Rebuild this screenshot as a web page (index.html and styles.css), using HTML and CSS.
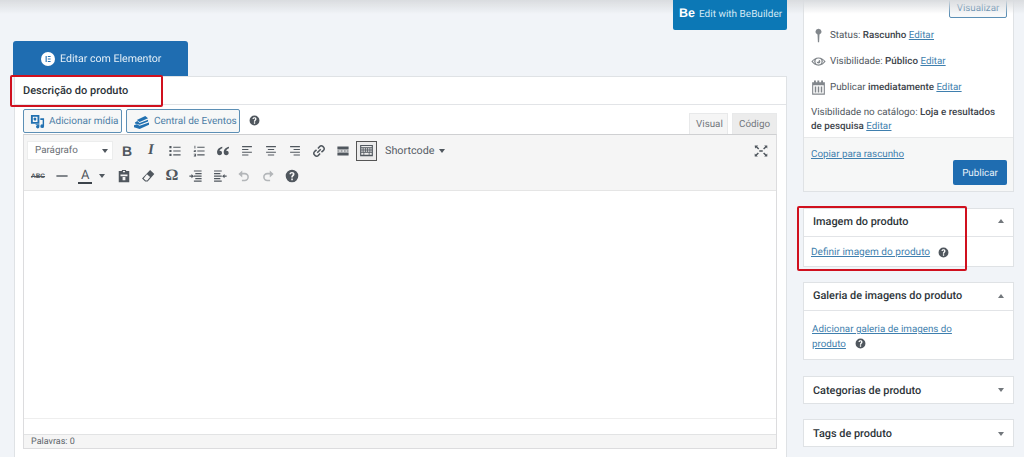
FILE: index.html
```html
<!DOCTYPE html>
<html lang="pt-BR">
<head>
<meta charset="utf-8">
<title>Editar produto</title>
<link rel="stylesheet" href="styles.css">
</head>
<body>
<div class="page">
  <main class="main">
    <a class="be-btn"><b class="be-logo">Be</b><span>Edit with BeBuilder</span></a>
    <a class="el-btn">
      <svg class="el-icon" viewBox="0 0 14 14"><circle cx="7" cy="7" r="7" fill="#fff"/><path d="M4.6 4h1.100v6H4.600zM6.800 4h2.800v1.100H6.800zM6.800 6.450h2.800v1.100H6.800zM6.800 8.900h2.800V10H6.800z" fill="#1f6db1"/></svg>
      <span>Editar com Elementor</span>
    </a>
    <section class="panel">
      <div class="mark mark-title"></div>
      <h2 class="panel-title">Descrição do produto</h2>
      <div class="editor-wrap">
        <div class="media-row">
          <a class="media-btn media-add">
            <svg viewBox="0 0 16 16" class="media-ico"><path fill="#2271b1" d="M1 1h9v9.500H1zm2 2v5.500h5V3zM4.600 4a1.500 1.500 0 1 0 2 2 1.500 1.500 0 0 0-2-2zM11 4.500h4v8.500a2 2 0 1 1-1.500-1.900V6.500H11zM6 11h4v2.500a1.800 1.800 0 1 1-1.500-1.700H6z" fill-rule="evenodd"/></svg>
            <span>Adicionar mídia</span>
          </a>
          <a class="media-btn media-ev">
            <svg viewBox="0 0 18 16" class="media-ico wide"><path fill="#2271b1" d="M4 6.500 13 2l3 2.500-9 4zM2 9l2.500-1.500L7 9.500l9-3.500v2L7 11.500 2 10zM1 12l3-1 3 1.500 10-3.500v2.500L7 16l-6-2z"/></svg>
            <span>Central de Eventos</span>
          </a>
          <svg viewBox="0 0 20 20" class="help-ico"><use href="#i-help"/></svg>
          <div class="tabs">
            <span class="tab tab-on">Visual</span>
            <span class="tab">Código</span>
          </div>
        </div>
        <div class="editor">
          <div class="toolbar">
            <div class="tb-row">
              <div class="fmt-select"><span>Parágrafo</span><i class="caret"></i></div>
              <span class="tb"><b class="glyph-b">B</b></span>
              <span class="tb"><i class="glyph-i">I</i></span>
              <span class="tb"><svg viewBox="0 0 20 20"><path d="M2 3h3v3H2zM2 8.500h3v3H2zM2 14h3v3H2zM7.500 3.800H18v1.500H7.500zM7.500 9.300H18v1.500H7.500zM7.500 14.800H18v1.500H7.500z"/></svg></span>
              <span class="tb"><svg viewBox="0 0 20 20"><path d="M3.500 2.500h1.300v4H3.500zM2.500 8.500h3.300v1.100H4v.6h1.800v1.100H2.500v-1.400l1.800-.9H2.500zM2.500 14h3.300v4H2.500v-1.100h2v-.5H3v-.8h1.500v-.5h-2zM7.500 3.800H18v1.500H7.500zM7.500 9.300H18v1.500H7.500zM7.500 14.800H18v1.500H7.500z"/></svg></span>
              <span class="tb"><svg viewBox="0 0 20 20"><path d="M9 4C5 5 1.500 7.500 1.500 11.800 1.500 14.500 3.200 16 5.200 16S8.600 14.600 8.600 12.800 7.400 9.800 5.700 9.800c-.4 0-.7 0-.8.100.2-1.700 1.700-3.100 4.100-3.900zM18.500 4c-4 1-7.500 3.500-7.500 7.800 0 2.700 1.700 4.200 3.700 4.200s3.400-1.400 3.400-3.200-1.200-3-2.900-3c-.4 0-.7 0-.8.100.2-1.700 1.700-3.100 4.100-3.900z"/></svg></span>
              <span class="tb"><svg viewBox="0 0 20 20"><path d="M3 3h14v1.600H3zM3 7h9v1.600H3zM3 11h14v1.600H3zM3 15h9v1.600H3z"/></svg></span>
              <span class="tb"><svg viewBox="0 0 20 20"><path d="M3 3h14v1.600H3zM5.500 7h9v1.600h-9zM3 11h14v1.600H3zM5.500 15h9v1.600h-9z"/></svg></span>
              <span class="tb"><svg viewBox="0 0 20 20"><path d="M3 3h14v1.600H3zM8 7h9v1.600H8zM3 11h14v1.600H3zM8 15h9v1.600H8z"/></svg></span>
              <span class="tb"><svg viewBox="0 0 20 20"><path fill="none" stroke="#50575e" stroke-width="2.200" d="M8.500 6.500l2.500-3a3.100 3.100 0 0 1 4.400-.1l1.200 1.200a3.100 3.100 0 0 1-.1 4.400l-3 2.500M11.500 13.500l-2.500 3a3.100 3.100 0 0 1-4.400.1l-1.200-1.200a3.100 3.100 0 0 1 .1-4.400l3-2.500M7.500 12.500l5-5"/></svg></span>
              <span class="tb"><svg viewBox="0 0 20 20"><path d="M2 3.500h16v4.500H2zM2 12h16v4.500H2zM2 9.400h3v1.200H2zM6.500 9.400h3v1.200h-3zM11 9.400h3v1.200h-3zM15 9.400h3v1.200h-3z"/></svg></span>
              <span class="tb tb-active"><svg viewBox="0 0 20 20"><path fill-rule="evenodd" d="M1.500 2.500h17v15h-17zM3 4v1.500h14V4zM3 7v1.500h2V7zm3 0v1.500h2V7zm3 0v1.500h2V7zm3 0v1.500h2V7zm3 0v1.500h2V7zM3 10v1.500h2V10zm3 0v1.500h2V10zm3 0v1.500h2V10zm3 0v1.500h2V10zm3 0v1.500h2V10zM3 13v2.500h3V13zm4 0v2.500h6V13zm7 0v2.500h3V13z"/></svg></span>
              <span class="shortcode">Shortcode<i class="caret"></i></span>
              <span class="tb tb-full"><svg viewBox="0 0 20 20"><path d="M1 2h5L4.500 3.500 7.500 6.500l-1.500 1.500L3 5 1.500 6.500zM19 2v4.500L17.500 5l-3 3L13 6.500l3-3L14.500 2zM1 18v-4.500L2.500 15l3-3L7 13.500l-3 3L5.500 18zM19 18h-4.500l1.500-1.500-3-3 1.500-1.500 3 3 1.500-1.500zM7.500 9h5v2h-5z"/></svg></span>
            </div>
            <div class="tb-row tb-row2">
              <span class="tb"><s class="glyph-abc">ABC</s></span>
              <span class="tb"><svg viewBox="0 0 20 20"><path d="M2 9h16v2H2z"/></svg></span>
              <span class="tb tb-color"><span class="glyph-a">A</span><i class="caret"></i></span>
              <span class="tb"><svg viewBox="0 0 20 20"><path fill-rule="evenodd" d="M7 1.500h6V3h4.500v16h-15V3H7zM8.500 3v1.500h3V3zM5 8v2.500h10V8zm3 3.500V16h4v-4.500z"/></svg></span>
              <span class="tb"><svg viewBox="0 0 20 20"><path fill-rule="evenodd" d="M13 1.500 19 7 9.500 18H6L1.500 13.500zM3.800 13.500 6.800 16.500H8.800L13 11.500 8.500 7.500z"/></svg></span>
              <span class="tb"><span class="glyph-o">Ω</span></span>
              <span class="tb"><svg viewBox="0 0 20 20"><path d="M7 2h11v1.700H7zM9 5.700h9v1.700H9zM7 9.300h11V11H7zM9 13h9v1.700H9zM7 16.500h11v1.700H7zM7 10.200 3.500 7.300v2H.5v1.700h3v2.100z"/></svg></span>
              <span class="tb"><svg viewBox="0 0 20 20"><path d="M1.500 2h11v1.700h-11zM1.500 5.700h9v1.700h-9zM1.500 9.300h11V11h-11zM1.500 13h9v1.700h-9zM1.500 16.500h11v1.700h-11zM13 10.200l3.500-2.900v2h3v1.700h-3v2.100z"/></svg></span>
              <span class="tb tb-off"><svg viewBox="0 0 20 20"><path d="M2 7 7.500 2v3.500H11a6 6 0 0 1 0 12H7v-2.200h4a3.800 3.800 0 0 0 0-7.600H7.500V12z"/></svg></span>
              <span class="tb tb-off"><svg viewBox="0 0 20 20"><path d="M18 7 12.500 2v3.500H9a6 6 0 0 0 0 12h4v-2.200H9a3.800 3.800 0 0 1 0-7.600h3.500V12z"/></svg></span>
              <span class="tb"><svg viewBox="0 0 20 20"><use href="#i-help"/></svg></span>
            </div>
          </div>
          <div class="editor-body"></div>
          <div class="editor-gap"></div>
          <div class="status">Palavras: 0</div>
        </div>
      </div>
    </section>
  </main>

  <aside class="side">
    <section class="box box-publish">
      <div class="pub-top"><a class="btn-preview">Visualizar</a></div>
      <div class="pub-row"><svg viewBox="0 0 20 20"><path d="M10 1a4 4 0 0 1 1.300 7.800L10.800 19H9.200l-.5-10.200A4 4 0 0 1 10 1z"/></svg><span>Status: <b>Rascunho</b> <a>Editar</a></span></div>
      <div class="pub-row"><svg viewBox="0 0 20 20"><path fill-rule="evenodd" d="M10 4.500c4 0 7.200 2.500 9.500 5.500-2.300 3-5.500 5.500-9.500 5.500S2.800 13 .5 10C2.800 7 6 4.500 10 4.500zm0 1.500a4 4 0 1 0 0 8 4 4 0 0 0 0-8zM4.500 7.600A9 9 0 0 0 2.600 10a9 9 0 0 0 2.600 2.700A6 6 0 0 1 4.500 7.600zm11 0a6 6 0 0 1-.7 5.100 9 9 0 0 0 2.600-2.700 9 9 0 0 0-1.900-2.400zM10 7.500a2.500 2.500 0 1 1-2.500 2.500 1.500 1.500 0 0 0 2.500-2.500z"/></svg><span>Visibilidade: <b>Público</b> <a>Editar</a></span></div>
      <div class="pub-row"><svg viewBox="0 0 20 20"><path fill-rule="evenodd" d="M4 .5h2.500V3h2V.5H11V3h2.500V.5H16V3h2.500v16.500h-17V3H4zM3 7v11h14V7zM5 8.500h2v8H5zm4 0h2v8H9zm4 0h2v8h-2z"/></svg><span>Publicar <b>imediatamente</b> <a>Editar</a></span></div>
      <p class="pub-cat">Visibilidade no catálogo: <b>Loja e resultados de pesquisa</b> <a>Editar</a></p>
      <div class="pub-foot">
        <a class="copy-link">Copiar para rascunho</a>
        <a class="btn-publish">Publicar</a>
      </div>
    </section>

    <section class="box">
      <div class="mark mark-image"></div>
      <header class="box-head"><h3>Imagem do produto</h3><i class="arrow up"></i></header>
      <div class="box-body body-image"><a>Definir imagem do produto</a><svg viewBox="0 0 20 20" class="help-ico"><use href="#i-help"/></svg></div>
    </section>

    <section class="box">
      <header class="box-head"><h3>Galeria de imagens do produto</h3><i class="arrow up"></i></header>
      <div class="box-body body-gallery"><a>Adicionar galeria de imagens do produto</a><svg viewBox="0 0 20 20" class="help-ico"><use href="#i-help"/></svg></div>
    </section>

    <section class="box">
      <header class="box-head closed"><h3>Categorias de produto</h3><i class="arrow"></i></header>
    </section>

    <section class="box">
      <header class="box-head closed"><h3>Tags de produto</h3><i class="arrow"></i></header>
    </section>
  </aside>
</div>

<svg class="sprite" width="0" height="0"><symbol id="i-help" viewBox="0 0 20 20"><path fill-rule="evenodd" d="M10 1a9 9 0 1 1 0 18 9 9 0 0 1 0-18zM8.900 13.400v2.500h2.300v-2.500zM10 4.200c-2.100 0-3.600 1.200-3.700 3.200h2.200c.1-.8.600-1.300 1.400-1.300s1.300.4 1.300 1.100c0 1.400-2.300 1.600-2.300 4.500v.6h2.300v-.4c0-1.900 2.400-2.100 2.400-4.800 0-1.800-1.600-2.900-3.600-2.900z"/></symbol></svg>
</body>
</html>
```
FILE: styles.css
```css
* { box-sizing: border-box; }
html, body { margin: 0; height: 457px; overflow: hidden; }
body {
  background: #f1f4f8;
  color: #50575e;
  font-family: Roboto, "Open Sans", "Liberation Sans", sans-serif;
  font-size: 9.800px;
  text-rendering: geometricPrecision;
}
a { cursor: pointer; }
.sprite { position: absolute; }

.page { position: relative; display: flex; align-items: flex-start; height: 457px; padding-left: 13px; filter: blur(.45px); }
.page::before {
  content: ""; position: absolute; left: 0; right: 0; top: 0; height: 14px; z-index: 3; pointer-events: none;
  background: linear-gradient(#d9dcdf, rgba(225,228,231,0));
}

/* main column */
.main { width: 774px; display: flex; flex-direction: column; align-items: flex-start; }
.be-btn {
  align-self: flex-end; position: relative; z-index: 4; width: 114px; height: 30px; padding: 0 0 1px 6px;
  display: flex; align-items: center; gap: 4px; white-space: nowrap;
  background: #0c78b6; color: #d3e9f5; border-radius: 0 0 2px 2px; font-size: 10px;
}
.be-logo { color: #fff; font-family: "Liberation Sans", sans-serif; font-size: 12.500px; margin-top: -3px; }
.el-btn {
  margin-top: 11px; width: 175px; height: 35px; padding-left: 28px;
  display: flex; align-items: center; gap: 5px;
  background: #1f6db1; color: #e4eff7; border-radius: 3px 3px 0 0; font-size: 10.600px;
}
.el-icon { width: 14px; height: 14px; }

.panel { position: relative; margin-left: 1px; width: 773px; height: 400px; background: #fff; border: 1px solid #dfe2e5; }
.panel-title { margin: 0; height: 28px; padding: 0 0 0 8px; display: flex; align-items: center; border-bottom: 1px solid #e2e4e7; color: #2c3338; font-size: 11px; font-weight: 500; }
.mark { position: absolute; z-index: 2; border: 2.500px solid #d0101e; border-radius: 2px; pointer-events: none; }
.mark-title { left: -5px; top: -2px; width: 153px; height: 32px; }
.mark-image { left: -7px; top: -3px; width: 170px; height: 65px; }

.editor-wrap { padding: 0 9px 0 8px; }
.media-row { display: flex; align-items: flex-end; height: 29px; }
.media-btn {
  display: flex; align-items: center; height: 24px; margin: 0 4px 1px 0; gap: 4px;
  border: 1px solid #5c8fb5; border-radius: 2px; background: #f6f7f7; color: #4d7ea6; font-size: 10px; white-space: nowrap;
}
.media-add { width: 99px; padding-left: 6px; }
.media-ev { width: 114px; padding-left: 6px; }
.media-ico { width: 15px; height: 15px; flex: none; }
.media-ico.wide { width: 17px; }
.help-ico { width: 11px; height: 11px; fill: #50575e; flex: none; }
.media-row .help-ico { margin: 0 0 8px 5px; }
.tabs { margin-left: auto; display: flex; gap: 4px; align-items: flex-end; }
.tab { height: 21px; padding: 0 6px; display: flex; align-items: center; border: 1px solid #e8e9ea; border-bottom: 0; background: #ececec; color: #72777c; font-size: 9.800px; }
.tab-on { background: #f5f5f5; width: 39px; }

.editor { border: 1px solid #dcdcde; border-top-color: #cfd0d2; }
.toolbar { height: 56px; background: #f5f5f5; border-bottom: 1px solid #e5e5e5; }
.tb-row { display: flex; align-items: center; height: 28px; padding: 3px 0 0 3px; }
.tb-row2 { height: 24px; padding: 0 0 0 2px; margin-top: 1px; }
.fmt-select { width: 86px; height: 19px; margin-right: 2px; padding: 0 4px 0 7px; display: flex; align-items: center; justify-content: space-between; background: #fff; border: 1px solid #eceded; color: #6a6f75; font-size: 9.800px; }
.caret { display: inline-block; width: 0; height: 0; border: 3.200px solid transparent; border-top: 4px solid #50575e; border-bottom: 0; }
.tb { flex: none; width: 24px; height: 20px; display: flex; align-items: center; justify-content: center; color: #50575e; }
.tb svg { width: 14px; height: 14px; fill: #50575e; }
.tb-active { width: 21px; margin: 0 0 0 1px; background: #ebebeb; border: 1px solid #555; }
.tb-active svg { width: 17px; height: 15px; }
.tb-off svg { fill: #b3b6b9; }
.tb-color { width: 36px; margin-right: 2px; gap: 7px; justify-content: flex-start; padding-left: 4px; }
.glyph-a { display: block; font-size: 13px; line-height: 13px; border-bottom: 2px solid #3c434a; padding: 0 3px; }
.glyph-abc { font-family: "Liberation Sans", sans-serif; font-size: 6.500px; font-weight: 700; text-decoration-thickness: 1px; }
.glyph-b { font-family: "Liberation Sans", sans-serif; font-size: 14px; }
.glyph-i { font-family: "Liberation Serif", serif; font-size: 15px; font-weight: 700; }
.glyph-o { font-family: "Liberation Serif", serif; font-size: 16px; font-weight: 700; }
.shortcode { margin-left: 8px; display: flex; align-items: center; gap: 4px; font-size: 10.800px; color: #555d66; }
.tb-full { margin-left: auto; margin-right: 3px; }
.editor-body { height: 228px; background: #fff; border-bottom: 1px solid #eee; }
.editor-gap { height: 15px; background: #fff; }
.status { height: 14px; padding-left: 7px; display: flex; align-items: center; background: #f5f5f5; border-top: 1px solid #e2e3e4; color: #60666c; font-size: 9px; }

/* sidebar */
.side { width: 211px; margin-left: 16px; display: flex; flex-direction: column; gap: 15.500px; }
.box { position: relative; background: #fff; border: 1px solid #dfe2e5; }
.box-publish { border-top: 0; }
.pub-top { display: flex; justify-content: flex-end; height: 18px; padding-right: 6px; }
.btn-preview { width: 58px; height: 22px; margin-top: -4px; padding-top: 2px; display: flex; align-items: center; justify-content: center; border: 1px solid #5c8fb5; border-radius: 2px; background: #f7f8f9; color: #4d7ea6; }
.pub-row { display: flex; align-items: center; height: 26px; gap: 4px; padding-left: 7px; }
.pub-top + .pub-row { margin-top: 4px; }
.pub-row svg { width: 15px; height: 15px; flex: none; fill: #82878c; }
.pub-row b, .pub-cat b { color: #3c434a; font-weight: 500; }
.pub-row a, .pub-cat a, .box-body a, .copy-link { color: #3f7fae; text-decoration: underline; }
.pub-cat { margin: 6px 7px 0; line-height: 14px; height: 31px; }
.pub-foot { position: relative; height: 54px; padding: 10px 7px; background: #f6f7f7; border-top: 1px solid #e8e9ea; }
.copy-link { display: block; line-height: 14px; }
.btn-publish { position: absolute; right: 6px; top: 22px; width: 54px; height: 25px; padding-top: 1px; display: flex; align-items: center; justify-content: center; background: #1f6db1; color: #e7f1f8; border-radius: 2px; }
.box-head { height: 28px; padding: 0 9px 2px 9px; display: flex; align-items: center; justify-content: space-between; border-bottom: 1px solid #e2e4e7; }
.box-head.closed { height: 26px; border-bottom: 0; padding: 1px 9px 0; }
.box-head h3 { margin: 0; color: #2c3338; font-size: 10.900px; font-weight: 500; }
.arrow { width: 0; height: 0; border: 3.500px solid transparent; border-top: 4.500px solid #72777c; border-bottom: 0; }
.arrow.up { border-top: 0; border-bottom: 4.500px solid #72777c; }
.body-image { height: 29px; padding: 2px 0 0 7px; display: flex; align-items: center; gap: 8px; font-size: 10.050px; }
.body-gallery { height: 48px; padding: 11px 40px 0 8px; line-height: 15px; }
.body-gallery .help-ico { margin-left: 9px; vertical-align: -2px; }
```
